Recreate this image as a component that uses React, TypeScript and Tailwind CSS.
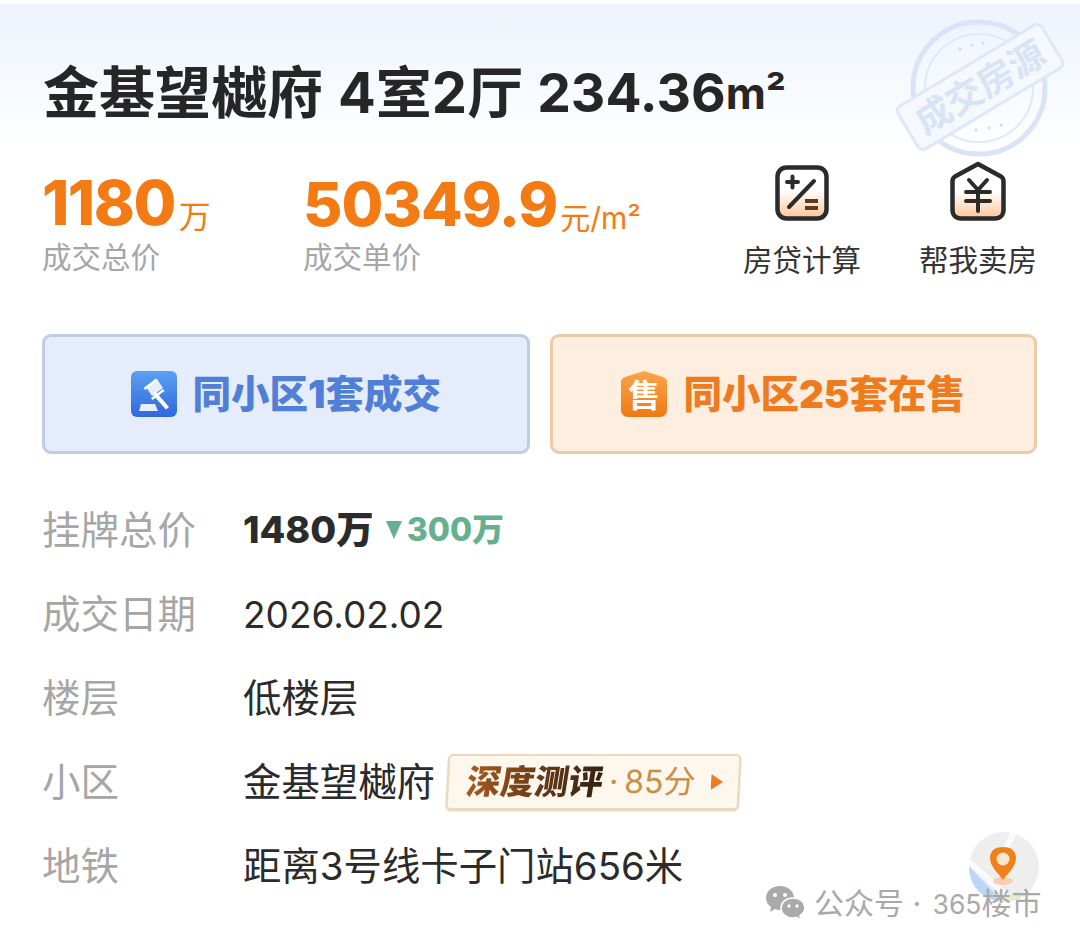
import type { ReactNode } from "react";

const cjk = "font-['Inter','Noto_Sans_CJK_SC',sans-serif]";

function Stamp() {
  return (
    <svg className="absolute left-[894px] top-[8px]" width="180" height="160" viewBox="-14 -4 180 160">
      <circle cx="71" cy="76" r="66" fill="none" stroke="#d9e4f6" strokeWidth="5" />
      <circle cx="71" cy="76" r="54" fill="none" stroke="#e0e9f7" strokeWidth="2" />
      <g transform="rotate(-31 72 75)">
        <rect x="-12" y="50" width="168" height="50" rx="6" fill="#f5f8fd" stroke="#dfe8f7" strokeWidth="3" />
        <text x="72" y="88" textAnchor="middle" fontSize="36" fontWeight="700" fill="#d8e3f5" fontFamily="'Noto Sans CJK SC', sans-serif">成交房源</text>
      </g>
      <g fill="#cfdbee">
        <circle cx="52" cy="37" r="1.5" /><circle cx="64" cy="33" r="1.5" /><circle cx="75" cy="31" r="1.5" />
        <circle cx="68" cy="118" r="1.5" /><circle cx="81" cy="116" r="1.5" /><circle cx="93" cy="113" r="1.5" />
      </g>
    </svg>
  );
}

function CalcIcon() {
  return (
    <svg width="54" height="56" viewBox="0 0 54 56">
      <defs>
        <linearGradient id="calcFill" x1="0" y1="0" x2="0" y2="1">
          <stop offset="0.45" stopColor="#ffffff" />
          <stop offset="1" stopColor="#fbc596" />
        </linearGradient>
      </defs>
      <rect x="2.500" y="2.500" width="49" height="51" rx="9" fill="url(#calcFill)" stroke="#2b2b2b" strokeWidth="4.500" />
      <g stroke="#2b2b2b" strokeWidth="4" strokeLinecap="round" fill="none">
        <path d="M12 17H23M17.500 11.500V22.500" />
        <path d="M39 16L14 42" />
      </g>
      <g stroke="#5f3b22" strokeWidth="4" fill="none">
        <path d="M30 36H43M30 43H43" />
      </g>
    </svg>
  );
}

function SellIcon() {
  return (
    <svg width="56" height="60" viewBox="0 0 56 60">
      <defs>
        <linearGradient id="sellFill" x1="0" y1="0" x2="0" y2="1">
          <stop offset="0.5" stopColor="#ffffff" />
          <stop offset="1" stopColor="#fbc596" />
        </linearGradient>
      </defs>
      <path d="M28 3L51 15.500C52.500 16.500 53.500 18 53.500 20V49C53.500 54 50 57.500 45 57.500H11C6 57.500 2.500 54 2.500 49V20C2.500 18 3.500 16.500 5 15.500Z" fill="url(#sellFill)" stroke="#2b2b2b" strokeWidth="4.500" strokeLinejoin="round" />
      <path d="M19 19L28 29L37 19M16 31H40M16 40H40M28 29V50" fill="none" stroke="#2b2b2b" strokeWidth="4" strokeLinecap="round" />
    </svg>
  );
}

function GavelIcon() {
  return (
    <svg width="46" height="46" viewBox="0 0 46 46">
      <defs>
        <linearGradient id="gavelBg" x1="0" y1="0" x2="0" y2="1">
          <stop offset="0" stopColor="#5ba0f2" />
          <stop offset="1" stopColor="#2f68dc" />
        </linearGradient>
      </defs>
      <rect width="46" height="46" rx="6" fill="url(#gavelBg)" />
      <g fill="#ffffff">
        <path d="M15 16L26 8L32 17L21 25Z" fill="#e6eefc" />
        <path d="M12.500 17L25 7.500L26.500 9.500L14 19Z" />
        <path d="M20 27L32 18L33.500 20L21.500 29Z" />
        <path d="M25 21L38 36L35 38.500L22 24Z" />
        <path d="M10 33H24L27 40H8Z" fill="#e6eefc" />
      </g>
    </svg>
  );
}

function SaleIcon() {
  return (
    <svg width="46" height="46" viewBox="0 0 46 46">
      <defs>
        <linearGradient id="saleBg" x1="0" y1="0" x2="0" y2="1">
          <stop offset="0" stopColor="#fba54a" />
          <stop offset="1" stopColor="#ef7a14" />
        </linearGradient>
      </defs>
      <path d="M23 0L42 6C45 7 46 9 46 11V39C46 43 43 46 39 46H7C3 46 0 43 0 39V11C0 9 1 7 4 6Z" fill="url(#saleBg)" />
      <text x="23" y="36" textAnchor="middle" fontSize="32" fontWeight="700" fill="#fff" fontFamily="'Noto Sans CJK SC', sans-serif">售</text>
    </svg>
  );
}

function PinBadge() {
  return (
    <svg className="absolute left-[969px] top-[832px]" width="70" height="70" viewBox="0 0 70 70">
      <defs>
        <clipPath id="mapClip"><circle cx="35" cy="35" r="35" /></clipPath>
      </defs>
      <g clipPath="url(#mapClip)">
        <rect width="70" height="70" fill="#eeeeee" />
        <path d="M0 34L34 70H0Z" fill="#bcd6f8" />
        <path d="M-2 28L36 62" stroke="#fafafa" strokeWidth="6" fill="none" />
        <path d="M46 -2L34 22" stroke="#fafafa" strokeWidth="6" fill="none" />
        <path d="M30 70L50 58L60 70Z" fill="#e3eccd" />
      </g>
      <ellipse cx="34" cy="49" rx="10" ry="4" fill="#f7cfae" />
      <path d="M34 48C28 40 21 34 21 26C21 18 27 15 34 15C41 15 47 18 47 26C47 34 40 40 34 48Z" fill="#f08019" />
      <circle cx="34" cy="27" r="6.500" fill="#fde6cf" />
    </svg>
  );
}

function WeChatIcon() {
  return (
    <svg width="42" height="36" viewBox="0 0 42 36">
      <path d="M15 1C7 1 1 6 1 13C1 17 3 20 6 22L5 27L10 24C11.500 24.500 13 25 15 25C22 25 29 20 29 13C29 6 23 1 15 1Z" fill="#aaaaaa" />
      <path d="M28 13C21 13 16 17.500 16 23C16 28.500 21 33 28 33C29.500 33 30.500 32.800 32 32.300L36 35L35 30.500C38 28.500 40 26 40 23C40 17.500 35 13 28 13Z" fill="#aaaaaa" stroke="#ffffff" strokeWidth="1.500" />
      <g fill="#ffffff">
        <circle cx="10" cy="10" r="2" /><circle cx="20" cy="10" r="2" />
        <circle cx="24" cy="21" r="1.700" /><circle cx="32" cy="21" r="1.700" />
      </g>
    </svg>
  );
}

function InfoRow({ label, children }: { label: string; children: ReactNode }) {
  return (
    <div className="flex h-[84px] items-center">
      <div className="w-[201px] text-[38.500px] leading-none text-[#a6a6a6]">{label}</div>
      <div className="flex items-center text-[38.400px] leading-none text-[#2b2b2b]">{children}</div>
    </div>
  );
}

export default function App() {
  return (
    <div className={`relative h-[945px] w-[1080px] overflow-hidden bg-white ${cjk}`}>
      <div className="absolute inset-x-0 top-[4px] h-[150px] bg-gradient-to-b from-[#edf3fc] to-white" />
      <Stamp />

      <div className="relative pl-[42px] pt-[62px]">
        <h1 className="ml-[1px] flex h-[62px] items-center text-[56px] font-bold leading-none text-[#262626]">
          <span>金基望樾府</span>
          <span className="ml-[15px]">4室2厅</span>
          <span className="ml-[14px] text-[53.500px]">234.36</span>
          <span className="text-[44px]">m²</span>
        </h1>

        <div className="mt-[50px] flex h-[112px]">
          <div className="w-[261px]">
            <div className="flex h-[60px] items-end leading-none text-[#f47b14]">
              <span className="text-[62px] font-extrabold tracking-[-1.500px]">1180</span>
              <span className="mb-[1px] ml-[4px] text-[32px]">万</span>
            </div>
            <div className="mt-[9px] text-[29.500px] leading-none text-[#a6a6a6]">成交总价</div>
          </div>
          <div className="w-[440px]">
            <div className="flex h-[60px] items-end leading-none text-[#f47b14]">
              <span className="text-[60.500px] font-extrabold tracking-[-1px]">50349.9</span>
              <span className="mb-[1px] ml-[3px] text-[30px] font-normal">元/m²</span>
            </div>
            <div className="mt-[9px] text-[29.500px] leading-none text-[#a6a6a6]">成交单价</div>
          </div>
          <div className="-mt-[13px] flex w-[118px] flex-col items-center">
            <div className="flex h-[60px] items-end"><CalcIcon /></div>
            <div className="mt-[25px] whitespace-nowrap text-[29.500px] leading-none text-[#333333]">房贷计算</div>
          </div>
          <div className="-mt-[13px] ml-[58px] flex w-[118px] flex-col items-center">
            <div className="flex h-[60px] items-end"><SellIcon /></div>
            <div className="mt-[25px] whitespace-nowrap text-[29.500px] leading-none text-[#333333]">帮我卖房</div>
          </div>
        </div>

        <div className="mt-[48px] grid w-[995px] grid-cols-2 gap-[20px]">
          <div className="flex h-[120px] items-center justify-center gap-[16px] rounded-[9px] border-[3px] border-[#bccde6] bg-[#e5ecfc]">
            <GavelIcon />
            <span className="text-[38.500px] font-black leading-none text-[#4f7fd6]">同小区1套成交</span>
          </div>
          <div className="flex h-[120px] items-center justify-center gap-[16px] rounded-[9px] border-[3px] border-[#eccba6] bg-[#fdeee0]">
            <SaleIcon />
            <span className="text-[38.500px] font-black leading-none text-[#ee7c1f]">同小区25套在售</span>
          </div>
        </div>

        <div className="mt-[34px]">
          <InfoRow label="挂牌总价">
            <span className="text-[37.500px] font-extrabold">1480万</span>
            <span className="ml-[12px] flex items-center text-[32px] font-extrabold text-[#65b08f]">
              <svg className="mr-[5px]" width="16" height="18" viewBox="0 0 17 19"><path d="M0 0H17L8.500 19Z" fill="#65b08f" /></svg>
              300万
            </span>
          </InfoRow>
          <InfoRow label="成交日期"><span className="text-[37px]">2026.02.02</span></InfoRow>
          <InfoRow label="楼层">低楼层</InfoRow>
          <InfoRow label="小区">
            金基望樾府
            <span className="ml-[12px] flex h-[56px] w-[293px] -skew-x-3 items-center rounded-[5px] border-2 border-[#ecd7bd] bg-[#fdf7ee] pl-[18px] shadow-[0_1px_2px_#ddc9ae]">
              <span className="-skew-x-6 bg-gradient-to-r from-[#a85b1d] to-[#33210f] bg-clip-text text-[34px] font-black leading-none text-transparent">深度测评</span>
              <span className="ml-[6px] text-[32px] leading-none text-[#c98f47]">·</span>
              <span className="ml-[6px] text-[32px] leading-none text-[#c98f47]">85分</span>
              <svg className="ml-[16px]" width="12" height="16" viewBox="0 0 12 16"><path d="M0 0L12 8L0 16Z" fill="#ef7d1f" /></svg>
            </span>
          </InfoRow>
          <InfoRow label="地铁">距离3号线卡子门站656米</InfoRow>
        </div>
      </div>

      <PinBadge />
      <div className="absolute left-[765px] top-[885px] flex items-center text-[30px] leading-none text-[#a9a9a9]">
        <WeChatIcon />
        <span className="ml-[7px] whitespace-nowrap">
          公众号 · <span className="ml-[3px] text-[26.500px]">365</span>楼市
        </span>
      </div>
    </div>
  );
}
